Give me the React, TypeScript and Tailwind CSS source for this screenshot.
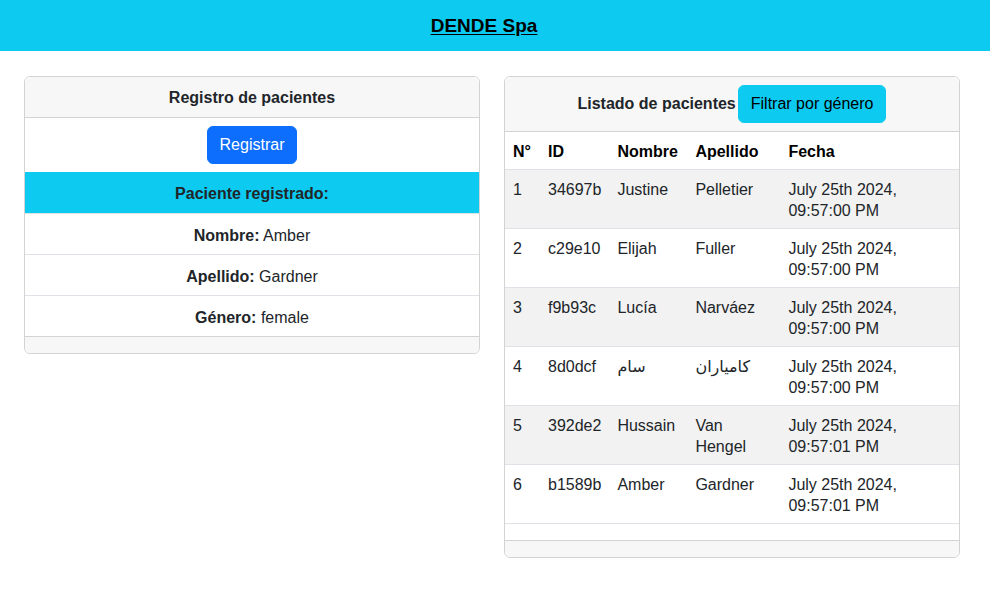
const pacientes = [
  { n: 1, id: "34697b", nombre: "Justine", apellido: "Pelletier", fecha: ["July 25th 2024,", "09:57:00 PM"] },
  { n: 2, id: "c29e10", nombre: "Elijah", apellido: "Fuller", fecha: ["July 25th 2024,", "09:57:00 PM"] },
  { n: 3, id: "f9b93c", nombre: "Lucía", apellido: "Narváez", fecha: ["July 25th 2024,", "09:57:00 PM"] },
  { n: 4, id: "8d0dcf", nombre: "سام", apellido: "کامیاران", fecha: ["July 25th 2024,", "09:57:00 PM"] },
  { n: 5, id: "392de2", nombre: "Hussain", apellido: "Van Hengel", fecha: ["July 25th 2024,", "09:57:01 PM"] },
  { n: 6, id: "b1589b", nombre: "Amber", apellido: "Gardner", fecha: ["July 25th 2024,", "09:57:01 PM"] },
];

const font = { fontFamily: '"Liberation Sans", "DejaVu Sans", sans-serif' };

export default function App() {
  return (
    <div className="min-h-screen bg-white text-[16px] leading-6 text-[#212529]" style={font}>
      <header className="h-[51px] bg-[#0dcaf0] flex items-center justify-center pr-[22px]">
        <h1 className="text-[19px] font-bold text-black underline underline-offset-2">DENDE Spa</h1>
      </header>

      <main className="mt-[25px] ml-6 w-[936px] grid grid-cols-2 gap-6 items-start">
        {/* registro */}
        <div className="border border-[#d3d3d3] rounded-md overflow-hidden">
          <div className="bg-[#f7f7f7] border-b border-[#d3d3d3] pt-[9px] pb-[7px] text-center font-bold">
            Registro de pacientes
          </div>
          <div className="py-2 flex justify-center">
            <button className="bg-[#0d6efd] text-white rounded-md px-3 py-1.5 border border-[#0d6efd]">
              Registrar
            </button>
          </div>
          <ul className="text-center">
            <li className="bg-[#0dcaf0] pt-[10px] pb-[7px] font-bold">Paciente registrado:</li>
            <li className="border-t border-[#dee2e6] pt-[10px] pb-[6px]">
              <b>Nombre:</b> Amber
            </li>
            <li className="border-t border-[#dee2e6] pt-[10px] pb-[6px]">
              <b>Apellido:</b> Gardner
            </li>
            <li className="border-t border-[#dee2e6] pt-[10px] pb-[6px]">
              <b>Género:</b> female
            </li>
          </ul>
          <div className="bg-[#f7f7f7] border-t border-[#d3d3d3] h-[17px]" />
        </div>

        {/* listado */}
        <div className="border border-[#d3d3d3] rounded-md overflow-hidden">
          <div className="bg-[#f7f7f7] border-b border-[#d3d3d3] py-2 flex items-center justify-center gap-0.5">
            <span className="font-bold">Listado de pacientes</span>
            <button className="bg-[#0dcaf0] text-black rounded-md px-3 py-1.5 border border-[#0dcaf0]">
              Filtrar por género
            </button>
          </div>
          <table className="w-full border-collapse mb-4 text-left leading-[21px] text-[#212529]">
            <thead>
              <tr className="border-b border-[#dee2e6]">
                <th className="w-[35px] pt-[9px] pb-[7px] px-2 font-bold text-black">N°</th>
                <th className="w-[69px] pt-[9px] pb-[7px] px-2 font-bold text-black">ID</th>
                <th className="w-[78px] pt-[9px] pb-[7px] px-2 font-bold text-black">Nombre</th>
                <th className="w-[93px] pt-[9px] pb-[7px] px-2 font-bold text-black">Apellido</th>
                <th className="pt-[9px] pb-[7px] px-2 font-bold text-black">Fecha</th>
              </tr>
            </thead>
            <tbody>
              {pacientes.map((p, i) => (
                <tr
                  key={p.id}
                  className={`border-b border-[#dee2e6] align-top ${i % 2 === 0 ? "bg-[#f2f2f2]" : "bg-white"}`}
                >
                  <td className="pt-[9px] pb-[7px] px-2">{p.n}</td>
                  <td className="pt-[9px] pb-[7px] px-2">{p.id}</td>
                  <td className="pt-[9px] pb-[7px] px-2">{p.nombre}</td>
                  <td className="pt-[9px] pb-[7px] px-2">{p.apellido}</td>
                  <td className="pt-[9px] pb-[7px] px-2">
                    {p.fecha[0]}
                    <br />
                    {p.fecha[1]}
                  </td>
                </tr>
              ))}
            </tbody>
          </table>
          <div className="bg-[#f7f7f7] border-t border-[#d3d3d3] h-[17px]" />
        </div>
      </main>
    </div>
  );
}
